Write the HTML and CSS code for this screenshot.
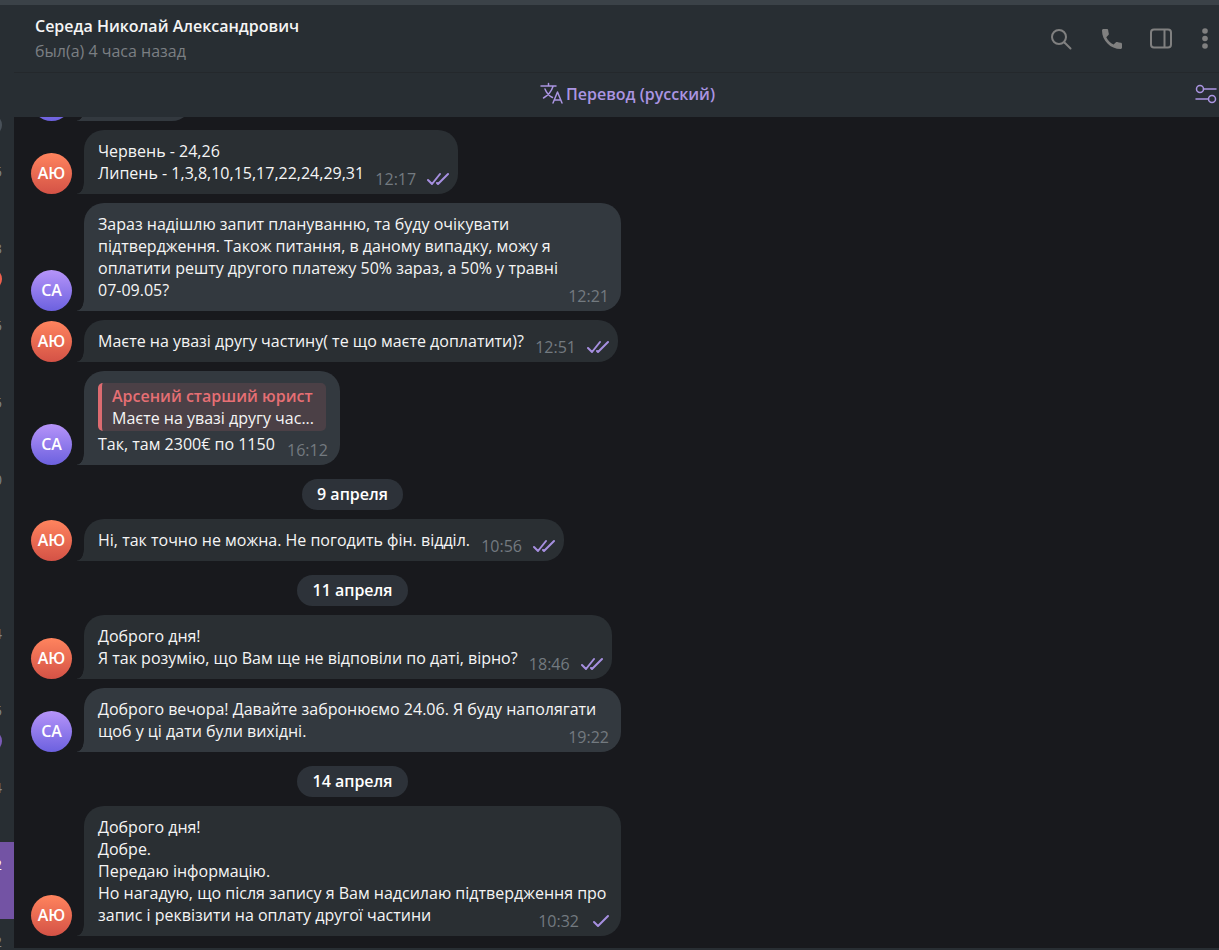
FILE: index.html
```html
<!DOCTYPE html>
<html lang="ru">
<head>
<meta charset="utf-8">
<title>Середа Николай Александрович</title>
<link rel="stylesheet" href="styles.css">
</head>

<body>

<svg class="sprite" aria-hidden="true">
	<symbol id="read" viewBox="0 0 22 14"><path d="M1 8l4 4L13 2M10 11l1 1L21 2"/></symbol>
	<symbol id="sent" viewBox="0 0 22 14"><path d="M4 8l4 4L18 2"/></symbol>
</svg>

<div class="window">

	<div class="sidebar">
		<div class="dialog"><span class="badge"></span></div>
		<div class="dialog"><span class="day">5</span></div>
		<div class="dialog"><span class="day">3</span><span class="badge red"></span></div>
		<div class="dialog"><span class="day">5</span></div>
		<div class="dialog"><span class="day">5</span></div>
		<div class="dialog"><span class="day">0</span></div>
		<div class="dialog"></div>
		<div class="dialog"><span class="day">4</span></div>
		<div class="dialog"><span class="day">5</span><span class="badge violet"></span></div>
		<div class="dialog"><span class="day">4</span></div>
		<div class="dialog active"><span class="day">2</span></div>
		<div class="dialog"><span class="day">2</span></div>
	</div>

	<div class="main">

		<div class="header">
			<div class="peer">
				<h1 class="name">Середа Николай Александрович</h1>
				<div class="status">был(а) 4 часа назад</div>
			</div>
			<div class="actions">
				<button class="icon-btn" aria-label="Поиск">
					<svg width="24" height="24" viewBox="0 0 24 24"><circle cx="10" cy="10" r="7"/><path d="M15.500 15.500l6 6"/></svg>
				</button>
				<button class="icon-btn" aria-label="Позвонить">
					<svg width="24" height="24" viewBox="0 0 24 24"><path class="solid" d="M4.600 2h3.200c.8 0 1.300.5 1.400 1.200.1 1.200.3 2.300.6 3.300.2.700 0 1.200-.4 1.600L7.300 10.200c1.500 3.200 4 5.800 7.300 7.400l2.100-2.100c.5-.5 1-.6 1.600-.4 1.100.4 2.200.6 3.400.6.800 0 1.300.6 1.300 1.300v3.600c0 .8-.5 1.400-1.300 1.400C11.500 22 3 13.500 3 3.400 3 2.600 3.700 2 4.600 2z"/></svg>
				</button>
				<button class="icon-btn" aria-label="Информация">
					<svg width="24" height="24" viewBox="0 0 24 24"><rect x="2" y="2.500" width="20" height="18" rx="3"/><path d="M15.500 3v17"/></svg>
				</button>
				<button class="icon-btn last" aria-label="Меню">
					<svg width="24" height="24" viewBox="0 0 24 24"><g class="solid"><circle cx="12" cy="4" r="2.800"/><circle cx="12" cy="11.500" r="2.800"/><circle cx="12" cy="19" r="2.800"/></g></svg>
				</button>
			</div>
		</div>

		<div class="translate">
			<button class="translate-btn">
				<svg width="24" height="24" viewBox="0 0 24 24"><path d="M1 4h15M8.500 1.500V4M13 4.500C11.500 9 8 13.500 3.500 16M5 7c1.500 4 4.500 7 7.500 8.500M13 21l4.500-11L22 21M14.500 18h6"/></svg>
				<span>Перевод (русский)</span>
			</button>
			<button class="tune-btn" aria-label="Настройки перевода">
				<svg width="22" height="20" viewBox="0 0 22 20"><circle cx="5" cy="5" r="3.500"/><path d="M8.500 5H21M1 15h12.500"/><circle cx="17" cy="15" r="3.500"/></svg>
			</button>
		</div>

		<div class="chat">
			<div class="list">

				<div class="row client">
					<div class="ava"></div>
					<div class="bubble cut"></div>
				</div>

				<div class="row lawyer">
					<div class="ava">АЮ</div>
					<div class="bubble read">
						<p>Червень - 24,26<br>Липень - 1,3,8,10,15,17,22,24,29,31</p>
						<div class="meta">12:17 <svg class="tick"><use href="#read"/></svg></div>
					</div>
				</div>

				<div class="row client">
					<div class="ava">СА</div>
					<div class="bubble">
						<p>Зараз надішлю запит плануванню, та буду очікувати підтвердження. Також питання, в даному випадку, можу я оплатити решту другого платежу 50% зараз, а 50% у травні <span class="nowrap">07-09.05?</span></p>
						<div class="meta">12:21</div>
					</div>
				</div>

				<div class="row lawyer">
					<div class="ava">АЮ</div>
					<div class="bubble read">
						<p>Маєте на увазі другу частину( те що маєте доплатити)?</p>
						<div class="meta">12:51 <svg class="tick"><use href="#read"/></svg></div>
					</div>
				</div>

				<div class="row client">
					<div class="ava">СА</div>
					<div class="bubble">
						<div class="quote">
							<div class="author">Арсений старший юрист</div>
							<div class="cite">Маєте на увазі другу час...</div>
						</div>
						<p>Так, там 2300€ по 1150</p>
						<div class="meta">16:12</div>
					</div>
				</div>

				<div class="date"><span>9 апреля</span></div>

				<div class="row lawyer">
					<div class="ava">АЮ</div>
					<div class="bubble read">
						<p>Ні, так точно не можна. Не погодить фін. відділ.</p>
						<div class="meta">10:56 <svg class="tick"><use href="#read"/></svg></div>
					</div>
				</div>

				<div class="date"><span>11 апреля</span></div>

				<div class="row lawyer">
					<div class="ava">АЮ</div>
					<div class="bubble read">
						<p>Доброго дня!<br>Я так розумію, що Вам ще не відповіли по даті, вірно?</p>
						<div class="meta">18:46 <svg class="tick"><use href="#read"/></svg></div>
					</div>
				</div>

				<div class="row client">
					<div class="ava">СА</div>
					<div class="bubble">
						<p>Доброго вечора! Давайте забронюємо 24.06. Я буду наполягати щоб у ці дати були вихідні.</p>
						<div class="meta">19:22</div>
					</div>
				</div>

				<div class="date"><span>14 апреля</span></div>

				<div class="row lawyer">
					<div class="ava">АЮ</div>
					<div class="bubble read">
						<p>Доброго дня!<br>Добре.<br>Передаю інформацію.<br>Но нагадую, що після запису я Вам надсилаю підтвердження про запис і реквізити на оплату другої частини</p>
						<div class="meta">10:32 <svg class="tick"><use href="#sent"/></svg></div>
					</div>
				</div>

			</div>
		</div>

	</div>

</div>

</body>

</html>
```
FILE: styles.css
```css
* { box-sizing: border-box; }
body {
	margin: 0;
	color: #f5f5f5;
	background: #18191d;
	font: 16px/22px "Open Sans", "Noto Sans", sans-serif;
}
h1, p { margin: 0; }
button {
	padding: 0;
	border: 0;
	color: inherit;
	font: inherit;
	background: none;
	cursor: pointer;
}
svg {
	display: block;
	fill: none;
	stroke: currentColor;
	stroke-width: 2;
	stroke-linecap: round;
	stroke-linejoin: round;
}
.solid {
	fill: currentColor;
	stroke: none;
}
.nowrap { white-space: nowrap; }
.sprite {
	position: absolute;
	width: 0;
	height: 0;
}
.window {
	display: flex;
	height: 100vh;
	overflow: hidden;
	border-top: 5px solid #3b4248;
}

/* dialogs list, only its right edge is visible */
.sidebar {
	flex: none;
	width: 14px;
	padding-top: 67px;
	overflow: hidden;
	background: #282e33;
}
.dialog {
	display: flex;
	flex-direction: column;
	align-items: flex-end;
	height: 77px;
	padding: 12px 12px 0 0;
}
.dialog.active { background: #7353a4; }
.day {
	color: #80858a;
	font-size: 14px;
}
.active .day { color: #fff; }
.badge {
	flex: none;
	width: 22px;
	height: 22px;
	margin-top: auto;
	margin-bottom: 13px;
	border-radius: 11px;
	background: #495159;
}
.red { background: #f0604d; }
.violet { background: #7b5bb8; }

.main {
	display: flex;
	flex: 1;
	flex-direction: column;
	min-width: 0;
}
.header {
	display: flex;
	flex: none;
	justify-content: space-between;
	align-items: center;
	height: 68px;
	padding-left: 21px;
	background: #282e33;
	border-bottom: 1px solid #24282c;
}
.name {
	font-size: 16px;
	line-height: 25px;
	font-weight: 600;
}
.status {
	color: #7b7f83;
	line-height: 25px;
}
.actions {
	display: flex;
	gap: 26px;
	padding-right: 2px;
	color: #808080;
}
.icon-btn.last { margin-left: -6px; }
.translate {
	display: flex;
	flex: none;
	align-items: center;
	height: 44px;
	padding: 0 2px 2px 46px;
	color: #ab95e2;
	background: #282e33;
}
.translate-btn {
	display: flex;
	align-items: center;
	gap: 2px;
	margin: 0 auto;
	font-weight: 600;
}
.translate svg { stroke-width: 1.5; }

.chat {
	display: flex;
	flex: 1;
	align-items: flex-end;
	min-height: 0;
	padding: 0 17px 12px;
	overflow: hidden;
	border-bottom: 2px solid #282e33;
}
.list {
	display: flex;
	flex-direction: column;
	gap: 9px;
	width: 100%;
	max-width: 590px;
}
.row {
	display: flex;
	align-items: flex-end;
	gap: 12px;
}
.ava {
	flex: none;
	width: 41px;
	height: 41px;
	color: #fff;
	font-weight: 600;
	line-height: 41px;
	text-align: center;
	border-radius: 50%;
}
.client .ava { background: linear-gradient(#b694f9, #6c61df); }
.lawyer .ava { background: linear-gradient(#ff845e, #d45246); }
.client { --bubble: #33393f; }
.lawyer { --bubble: #2a2f33; }
.bubble {
	position: relative;
	padding: 10px 14px;
	border-radius: 20px 20px 20px 0;
	background: var(--bubble);
}
.bubble::before {
	content: "";
	position: absolute;
	left: -7px;
	bottom: 0;
	width: 7px;
	height: 11px;
	background: radial-gradient(7px 11px at 0 0, transparent 92%, var(--bubble) 100%);
}
/* keeps room for the time on the last line */
.bubble p::after {
	content: "";
	display: inline-block;
	width: 51px;
}
.bubble.read p::after { width: 80px; }
.bubble.cut {
	width: 108px;
	height: 42px;
}
.meta {
	position: absolute;
	right: 12px;
	bottom: 4px;
	display: flex;
	align-items: center;
	gap: 11px;
	color: #737a80;
}
.read .meta { right: 9px; }
.tick {
	width: 22px;
	height: 14px;
	color: #a68fe0;
}
.quote {
	width: 0;
	min-width: 100%;
	margin: 2px 0;
	padding: 2px 9px 2px 10px;
	overflow: hidden;
	white-space: nowrap;
	border-left: 4px solid #dd6b70;
	border-radius: 5px;
	background: #4b4046;
}
.author {
	color: #e66f74;
	font-weight: 600;
}
.date {
	margin: 5px 0 0 53px;
	text-align: center;
}
.date span {
	display: block;
	width: fit-content;
	margin: 0 auto;
	padding: 0 15px;
	color: #fff;
	font-weight: 600;
	line-height: 31px;
	border-radius: 16px;
	background: #2d3239;
}
```
